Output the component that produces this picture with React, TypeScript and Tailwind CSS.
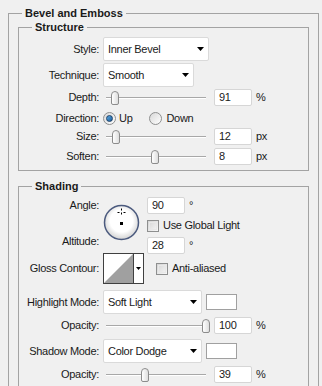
const Arrow = () => (
  <svg width="7" height="4" viewBox="0 0 7 4" className="shrink-0">
    <path d="M0 0H7L3.5 4Z" fill="#000" />
  </svg>
)

const Dropdown = ({ value, className }: { value: string; className: string }) => (
  <div className={`flex h-[24px] items-center justify-between rounded-[2px] border border-[#dadada] bg-white pl-[4px] pr-[4px] ${className}`}>
    <span>{value}</span>
    <Arrow />
  </div>
)

const Field = ({ value, unit }: { value: string; unit: string }) => (
  <div className="flex items-center gap-[4px]">
    <div className="flex h-[17px] w-[38px] items-center rounded-[2px] border border-[#d6d6d6] bg-white pl-[4px]">{value}</div>
    <span>{unit}</span>
  </div>
)

const Slider = ({ thumb }: { thumb: string }) => (
  <div className="relative h-[17px] w-[106px] shrink-0">
    <div className="ml-[3px] mt-[8px] h-[2px] w-[100px] border-t border-b border-t-[#a8a8a8] border-b-white" />
    <div className={`absolute top-[2px] h-[14px] w-[8px] rounded-t-[4px] rounded-b-[2px] border border-[#8c8c8c] bg-gradient-to-r from-white to-[#dedede] ${thumb}`} />
  </div>
)

const Checkbox = () => (
  <div className="h-[12px] w-[12px] shrink-0 border border-[#8e8f8f] bg-gradient-to-br from-[#d4d4d4] to-[#f8f8f8] p-[1px]">
    <div className="h-full w-full border border-[#e8e8e8]" />
  </div>
)

const Radio = ({ on }: { on?: boolean }) => (
  <div className="flex h-[13px] w-[13px] shrink-0 items-center justify-center rounded-full border border-[#8e8f8f] bg-gradient-to-br from-[#d8d8d8] to-white">
    {on && <div className="h-[7px] w-[7px] rounded-full border border-[#1c3f66] bg-gradient-to-br from-[#5aa8e0] to-[#1b5e9e]" />}
  </div>
)

const Label = ({ children }: { children: string }) => (
  <div className="w-[80px] shrink-0 text-right">{children}</div>
)

const Dial = () => (
  <svg width="37" height="37" viewBox="0 0 37 37" className="shrink-0">
    <defs>
      <radialGradient id="dg" cx="0.5" cy="0.45" r="0.55">
        <stop offset="0.6" stopColor="#ffffff" />
        <stop offset="1" stopColor="#d2d2d2" />
      </radialGradient>
    </defs>
    <circle cx="18.5" cy="18.5" r="17" fill="url(#dg)" stroke="#4b5a7e" strokeWidth="1.5" />
    <path d="M18.5 4.5v2M18.5 8.5v2M14.5 8.5h2M20.5 8.5h2" stroke="#000" strokeWidth="1" />
    <rect x="17" y="18" width="3" height="3" fill="#000" />
  </svg>
)

const Contour = () => (
  <div className="flex h-[31px] border border-[#404040] bg-white">
    <svg width="29" height="29" viewBox="0 0 29 29">
      <path d="M0 29L29 0V29Z" fill="#a0a0a0" />
    </svg>
    <div className="flex w-[10px] items-center justify-center border-l border-[#404040]">
      <svg width="5" height="3" viewBox="0 0 5 3"><path d="M0 0H5L2.5 3Z" fill="#000" /></svg>
    </div>
  </div>
)

const Group = ({ title, className, children }: { title: string; className: string; children: React.ReactNode }) => (
  <fieldset className={`border border-[#a3a3a3] p-0 ${className}`}>
    <legend className="ml-[13px] px-[3px] text-[11px] font-bold leading-[14px] tracking-normal">{title}</legend>
    {children}
  </fieldset>
)

export default function App() {
  return (
    <div className="h-[386px] w-[322px] overflow-hidden bg-[#f0f0f0] pt-[6px] font-['Liberation_Sans',Arial,sans-serif] text-[11px] leading-[13px] tracking-[-0.3px] text-[#1a1a1a]">
      <Group title="Bevel and Emboss" className="ml-[8px] h-[420px] w-[311px]">
        <div className="px-[9px]">
          <Group title="Structure" className="w-[291px]">
            <div className="flex flex-col pb-[5px] pt-[3px]">
              <div className="flex h-[24px] items-center gap-[4px]">
                <Label>Style:</Label>
                <Dropdown value="Inner Bevel" className="w-[106px]" />
              </div>
              <div className="mt-[2px] flex h-[24px] items-center gap-[4px]">
                <Label>Technique:</Label>
                <Dropdown value="Smooth" className="w-[91px]" />
              </div>
              <div className="mt-[2px] flex h-[17px] items-center gap-[4px]">
                <Label>Depth:</Label>
                <Slider thumb="left-[8px]" />
                <div className="ml-[1px]"><Field value="91" unit="%" /></div>
              </div>
              <div className="mt-[4px] flex h-[16px] items-center gap-[4px]">
                <Label>Direction:</Label>
                <Radio on />
                <span className="ml-[-1px]">Up</span>
                <div className="ml-[13px]"><Radio /></div>
                <span>Down</span>
              </div>
              <div className="mt-[2px] flex h-[17px] items-center gap-[4px]">
                <Label>Size:</Label>
                <Slider thumb="left-[9px]" />
                <div className="ml-[1px]"><Field value="12" unit="px" /></div>
              </div>
              <div className="mt-[3px] flex h-[17px] items-center gap-[4px]">
                <Label>Soften:</Label>
                <Slider thumb="left-[48px]" />
                <div className="ml-[1px]"><Field value="8" unit="px" /></div>
              </div>
            </div>
          </Group>

          <Group title="Shading" className="mt-[8px] w-[291px]">
            <div className="flex flex-col pb-[7px] pt-[4px]">
              <div className="flex h-[52px] gap-[4px]">
                <div className="flex w-[80px] shrink-0 flex-col justify-between pb-[1px] pt-[2px] text-right">
                  <span>Angle:</span>
                  <span>Altitude:</span>
                </div>
                <div className="mt-[7px]"><Dial /></div>
                <div className="ml-[3px] flex flex-col">
                  <Field value="90" unit="°" />
                  <div className="mt-[5px] flex items-center gap-[4px]">
                    <Checkbox />
                    <span>Use Global Light</span>
                  </div>
                  <div className="mt-[5px]"><Field value="28" unit="°" /></div>
                </div>
              </div>
              <div className="mt-[4px] flex h-[31px] items-center gap-[4px]">
                <Label>Gloss Contour:</Label>
                <Contour />
                <div className="ml-[8px]"><Checkbox /></div>
                <span>Anti-aliased</span>
              </div>
              <div className="mt-[6px] flex h-[24px] items-center gap-[4px]">
                <Label>Highlight Mode:</Label>
                <Dropdown value="Soft Light" className="w-[99px]" />
                <div className="h-[16px] w-[31px] border border-[#a0a0a0] bg-white" />
              </div>
              <div className="mt-[3px] flex h-[17px] items-center gap-[4px]">
                <Label>Opacity:</Label>
                <Slider thumb="left-[99px]" />
                <div className="ml-[1px]"><Field value="100" unit="%" /></div>
              </div>
              <div className="mt-[5px] flex h-[24px] items-center gap-[4px]">
                <Label>Shadow Mode:</Label>
                <Dropdown value="Color Dodge" className="w-[99px]" />
                <div className="h-[16px] w-[31px] border border-[#a0a0a0] bg-white" />
              </div>
              <div className="mt-[3px] flex h-[17px] items-center gap-[4px]">
                <Label>Opacity:</Label>
                <Slider thumb="left-[38px]" />
                <div className="ml-[1px]"><Field value="39" unit="%" /></div>
              </div>
            </div>
          </Group>
        </div>
      </Group>
    </div>
  )
}
